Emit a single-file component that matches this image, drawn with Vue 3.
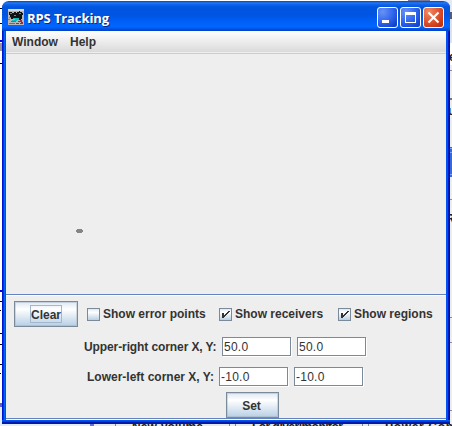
<script setup>
import { reactive } from 'vue'

const options = reactive([
  { label: 'Show error points', checked: false, kind: 'errors' },
  { label: 'Show receivers', checked: true, kind: 'receivers' },
  { label: 'Show regions', checked: true, kind: 'regions' },
])
const corners = reactive([
  { label: 'Upper-right corner X, Y:', x: '50.0', y: '50.0', kind: 'upper' },
  { label: 'Lower-left corner X, Y:', x: '-10.0', y: '-10.0', kind: 'lower' },
])
</script>

<template>
  <div class="desktop">
    <svg class="backdrop" width="452" height="426" shape-rendering="crispEdges">
      <rect width="452" height="426" fill="#fff" />
      <path d="M0 8.5H2M0 23.5H2M0 63.5H2M0 301.5H2M0 310.5H1M0 333.5H2M0 344.5H2M0 364.5H2M0 373.5H1" stroke="#000" />
      <path d="M0 40.5H2M0 290.5H2" stroke="#0000e8" stroke-width="2" />
      <path d="M0 43H2V51H0Z" fill="#99949c" />
      <rect y="403" width="2" height="4" fill="#5964c4" />
      <rect y="407" width="2" height="19" fill="#e4edfc" />
      <rect x="449" width="3" height="426" fill="#eee" />
      <rect x="408" width="22" height="2" fill="#777797" />
      <rect x="430" width="22" height="12" fill="#e5e8f5" />
      <rect x="449" y="12" width="3" height="7" fill="#525e75" />
      <rect x="449" y="19" width="3" height="24" fill="#dce2ef" />
      <rect x="449" y="43" width="3" height="22" fill="#fff" />
      <rect x="449" y="98" width="3" height="2" fill="#777" />
      <rect x="449" y="147" width="3" height="30" fill="#386bd2" />
      <path d="M449 148.5H452M449 152.5H452M449 174.5H452" stroke="#7ba5f1" />
      <path d="M450 70.5H452M450 199.5H452M450 317.5H452M450 342.5H452M450 410.5H452" stroke="#8c8c99" />
      <g class="backdrop-text">
        <text x="449" y="61">e</text>
        <text x="448" y="115">u</text>
        <text x="446" y="223">R</text>
      </g>
      <rect y="424" width="90" height="2" fill="#e4edfc" />
      <rect x="90" y="424" width="4" height="2" fill="#6974cf" />
      <rect x="94" y="424" width="358" height="2" fill="#e7ebf0" />
      <path d="M115.5 424V426M229.5 424V426M235.5 424V426M362.5 424V426M368.5 424V426" stroke="#7a8a99" />
      <g class="backdrop-text">
        <text x="132" y="431" textLength="71">New Volume</text>
        <text x="252" y="431" textLength="91">For diver|monitor</text>
        <text x="385" y="431" textLength="78">Power Contr</text>
      </g>
    </svg>

    <main class="window">
      <header class="titlebar">
        <svg class="app-icon" width="16" height="16" shape-rendering="crispEdges">
          <rect width="16" height="16" fill="#b7b5b5" />
          <path d="M0 0H16V2H0Z" fill="#d8d8d8" />
          <path d="M1 3H4V4H6V3H8V4H9V3H11V2H12V3H14V4H15V6H14V10H13V11H11V9H5V10H3V8H2V6H1Z" fill="#101315" />
          <path d="M2 4.5H4M6 6.5H8M11 4.5H13M1 8.5H3M0 10.5H2" stroke="#71888a" />
          <path d="M5 9.5H11M4 11.5H9M7 10.5H11" stroke="#16b9b5" />
          <path d="M3 12.5H8M1 14.5H7" stroke="#627475" />
          <path d="M10 12.5H14M12 11.5H14M8 14.5H11M12 14.5H15M13 13.5H15" stroke="#a22a35" />
        </svg>
        <h1>RPS Tracking</h1>
        <div class="controls">
          <button class="control" aria-label="Minimize">
            <svg width="19" height="19"><path d="M4 12H11V15H4Z" fill="#fff" /></svg>
          </button>
          <button class="control" aria-label="Maximize">
            <svg width="19" height="19"><path d="M4 4H15V15H4ZM5 7V14H14V7Z" fill="#fff" fill-rule="evenodd" /></svg>
          </button>
          <button class="control close" aria-label="Close">
            <svg width="19" height="19"><path d="M4.5 4.5L14.5 14.5M14.5 4.5L4.5 14.5" stroke="#fff" stroke-width="2.2" /></svg>
          </button>
        </div>
      </header>

      <nav class="menu"><span class="window-label">Window</span><span class="help-label">Help</span></nav>

      <section class="canvas">
        <svg width="440" height="240" shape-rendering="crispEdges">
          <path d="M71 175H76V176H77V178H76V179H71V178H70V176H71Z" fill="#858585" />
        </svg>
      </section>

      <section class="panel">
        <div class="options">
          <button class="button clear"><span>Clear</span></button>
          <label v-for="option in options" :key="option.kind" :class="['option', option.kind]">
            <input v-model="option.checked" type="checkbox">
            <span class="box">
              <svg v-if="option.checked" width="11" height="11" shape-rendering="crispEdges">
                <path d="M2 4H4V6H5V5H6V4H7V3H8V2H10V3H9V4H8V5H7V6H6V7H5V8H4V9H2Z" fill="#333" />
              </svg>
            </span>
            <span class="label">{{ option.label }}</span>
          </label>
        </div>
        <div v-for="corner in corners" :key="corner.kind" :class="['corner', corner.kind]">
          <span class="label">{{ corner.label }}</span>
          <input v-model="corner.x" :aria-label="corner.label + ' X'">
          <input v-model="corner.y" :aria-label="corner.label + ' Y'">
        </div>
        <button class="button set">Set</button>
      </section>
    </main>
  </div>
</template>

<style>
body { overflow: hidden; }
</style>

<style scoped>
* { box-sizing: border-box; }
.desktop {
  position: relative;
  width: 452px;
  height: 426px;
  padding: 1px 2px 2px;
  overflow: hidden;
  color: #333;
  font: bold 12px/15px "Liberation Sans", Arial, sans-serif;
}
.backdrop { position: absolute; left: 0; top: 0; }
.backdrop-text { font: bold 12px "Liberation Sans", sans-serif; fill: #222; }
.window {
  position: relative;
  width: 448px;
  height: 423px;
  padding: 0 4px 4px;
  background: linear-gradient(#0754ed 0 1px, #0042df 1px 2px, #0019ad 2px) bottom / 100% 4px no-repeat, linear-gradient(90deg, #0014d0 0 1px, #0831dc 1px 2px, #0267f5 2px 3px, #0150e0 3px 4px, #eee 4px 444px, #0150ef 444px 446px, #0019c0 446px 447px, #001292 447px);
  border-radius: 7px 7px 0 0;
  overflow: hidden;
}
.titlebar {
  display: flex;
  height: 30px;
  margin: 0 -4px;
  padding: 6px 6px 0;
  background: linear-gradient(#0641bd 0, #247bf0 2px, #1467ee 3px, #0056df 6px, #0054e3 14px, #0062fb 22px, #0066ff 26px, #0053e1 28px, #003fca 30px);
}
.app-icon { display: block; margin-top: 2px; }
h1 {
  margin: 2px 0 0 3px;
  color: #fff;
  font: bold 13px/19px "Open Sans", "Noto Sans", sans-serif;
  letter-spacing: -0.1px;
  text-shadow: 1px 1px #0a2a8c;
  white-space: nowrap;
}
.controls { display: flex; gap: 2px; margin-left: auto; }
.control {
  width: 21px;
  height: 21px;
  padding: 0;
  border: 1px solid #fff;
  border-radius: 3px;
  background: radial-gradient(circle at 25% 20%, #6792f3, #356af0 45%, #1747d2 80%, #0d41bd);
}
.control svg { display: block; }
.close { background: radial-gradient(circle at 25% 20%, #f08b65, #df5733 45%, #c83714 80%, #b52e10); }
.menu {
  display: flex;
  height: 23px;
  padding: 4px 0 0 6px;
  border-bottom: 1px solid #ccc;
  background: linear-gradient(#fff, #dadada 21px, #eee 21px);
}
.window-label { width: 58px; }
.canvas { height: 240px; background: #eee; }
.canvas svg { display: block; }
.panel {
  height: 126px;
  padding-top: 5px;
  border-top: 1px solid #6382bf;
  border-bottom: 1px solid #fff;
  box-shadow: inset 0 1px #fff, inset 0 -1px #6382bf;
  background: #eee;
}
.options { display: flex; height: 28px; align-items: center; padding-left: 8px; white-space: nowrap; }
.button {
  padding: 0;
  border: 1px solid #7a8a99;
  background: linear-gradient(#dde8f3, #fff 30%, #b8cfe5);
  color: #333;
  font: inherit;
  box-shadow: inset 0 0 0 1px #9aabba66;
}
.clear { width: 64px; height: 26px; margin-right: 9px; }
.clear span { display: inline-block; width: 32px; height: 18px; border: 1px solid #a3b8cc; line-height: 18px; text-align: center; vertical-align: middle; }
.option { display: flex; align-items: center; }
.option .label { padding-top: 1px; }
.option input { position: absolute; opacity: 0; }
.errors { width: 132px; }
.receivers { width: 119px; }
.box { width: 13px; height: 13px; margin-right: 3px; border: 1px solid #7a8a99; background: linear-gradient(#dde8f3, #fff 30%, #b8cfe5); }
.box svg { display: block; }
.corner { display: flex; height: 20px; align-items: center; margin-top: 8px; }
.corner .label { padding-top: 2px; white-space: nowrap; }
.upper { padding-left: 78px; }
.upper .label { width: 138px; letter-spacing: -0.1px; }
.lower { margin-top: 10px; padding-left: 81px; }
.lower .label { width: 132px; }
.corner input {
  width: 69px;
  height: 19px;
  margin: 0 6px 0 0;
  padding: 2px 1px 0;
  border: 1px solid #7a8a99;
  box-shadow: 1px 1px #fff;
  background: #fff;
  color: #333;
  font: 12px/15px "Liberation Sans", Arial, sans-serif;
  letter-spacing: 0.25px;
}
.set { display: block; width: 53px; height: 26px; margin: 6px 0 0 220px; padding: 2px 2px 0 0; }
</style>
